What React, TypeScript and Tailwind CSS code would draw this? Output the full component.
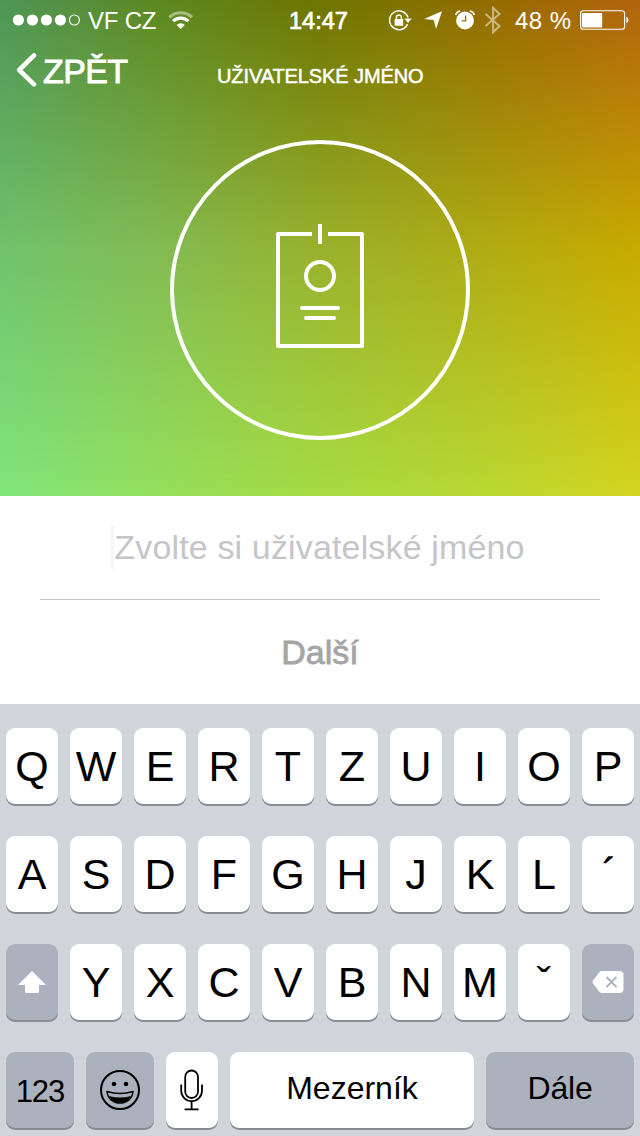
import type { ReactNode } from 'react';

function StatusBar() {
  return (
    <div className="flex h-10 items-center text-[24px] leading-[40px]">
      <svg className="ml-3 shrink-0" width="70" height="16" viewBox="0 0 70 16" fill="currentColor">
        <circle cx="6.4" cy="8" r="5.6" />
        <circle cx="20.4" cy="8" r="5.6" />
        <circle cx="34.4" cy="8" r="5.6" />
        <circle cx="48.4" cy="8" r="5.6" />
        <circle cx="62.4" cy="8" r="5" fill="none" stroke="currentColor" strokeWidth="1.1" />
      </svg>
      <span className="ml-[6px] w-[70px] shrink-0 pt-[2px] tracking-[-0.2px] whitespace-nowrap">VF CZ</span>
      <svg className="ml-[10px] shrink-0" width="26" height="20" viewBox="0 0 26 20" fill="none" stroke="currentColor" strokeWidth="3.2">
        <path d="M1.3 7.4a16.3 16.3 0 0 1 22.8 0" strokeOpacity=".45" strokeWidth="2.9" />
        <path d="M5.1 11.2a11 11 0 0 1 15.2 0" />
        <path d="M8.6 14.9a5.8 5.8 0 0 1 8.2 0l-4.1 4.1z" fill="currentColor" stroke="none" />
      </svg>
      <span className="ml-[95px] w-[60px] shrink-0 pt-[2px] text-[23.5px] tracking-[0px] [-webkit-text-stroke:0.7px_currentColor]">14:47</span>
      <svg className="ml-[39px] shrink-0" width="24" height="24" viewBox="0 0 24 24" fill="none" stroke="currentColor" strokeWidth="1.5">
        <path d="M19.6 16.1a9.4 9.4 0 1 1 .4-6.6" />
        <path d="M16.3 10.600h7.400L20 14.900z" fill="currentColor" stroke="none" />
        <rect x="6.600" y="11" width="8.600" height="6.700" rx=".5" fill="currentColor" stroke="none" />
        <path d="M8.400 11V9.400a2.500 2.500 0 0 1 5 0V11" />
      </svg>
      <svg className="ml-[12px] shrink-0" width="18" height="18" viewBox="0 0 18 18" fill="currentColor">
        <path d="M18 .2 12 18 9.800 9 0 8z" />
      </svg>
      <svg className="ml-[13px] shrink-0" width="20" height="20" viewBox="0 0 20 20" fill="none" stroke="currentColor">
        <circle cx="10" cy="10.500" r="8.900" fill="currentColor" stroke="none" />
        <path d="M.8 5.200A5 5 0 0 1 5.200 1.100M19.200 5.200a5 5 0 0 0-4.400-4.100" strokeWidth="1.600" />
        <path d="M10.600 5.500v5.300H6.500" stroke="#8d7c00" strokeWidth="1.300" />
      </svg>
      <svg className="ml-[9px] shrink-0 opacity-50" width="18" height="28" viewBox="0 0 18 28" fill="none" stroke="currentColor" strokeWidth="2">
        <path d="m1.500 8 14 12-6.400 6.300V1.800L15.500 8l-14 12" />
      </svg>
      <span className="ml-[13px] w-[58px] shrink-0 pt-[2px] tracking-[0.5px] whitespace-nowrap">48 %</span>
      <svg className="ml-[7px] shrink-0" width="50" height="20" viewBox="0 0 50 20" fill="none" stroke="currentColor">
        <rect x=".6" y=".8" width="44" height="18.400" rx="2.800" strokeWidth="1.100" />
        <rect x="2" y="3" width="20.200" height="14.500" rx="1" fill="currentColor" stroke="none" />
        <path d="M46.400 6.800c2.600 1.300 2.600 5.100 0 6.400z" fill="currentColor" stroke="none" />
      </svg>
    </div>
  );
}

function NavBar() {
  return (
    <div className="flex h-[100px] items-start">
      <svg className="mt-[12px] ml-[16px] shrink-0" width="22" height="36" viewBox="0 0 22 36" fill="none" stroke="currentColor" strokeWidth="4.600" strokeLinecap="round" strokeLinejoin="round">
        <path d="M18 3.400 3.200 18 18 32.400" />
      </svg>
      <button className="mt-[11px] ml-[5px] w-[90px] shrink-0 text-left text-[34px] leading-[40px] tracking-[-0.6px] whitespace-nowrap [-webkit-text-stroke:0.9px_currentColor]">ZPĚT</button>
      <h1 className="mt-[24px] ml-[84px] text-[20px] leading-[24px] tracking-[-0.1px] whitespace-nowrap [-webkit-text-stroke:0.5px_currentColor]">UŽIVATELSKÉ JMÉNO</h1>
    </div>
  );
}

function Badge() {
  return (
    <div className="mx-auto flex size-[300px] items-center justify-center rounded-full border-4 border-white">
      <svg className="mb-[8px]" width="88" height="124" viewBox="0 0 88 124" fill="none" stroke="currentColor" strokeWidth="4" strokeLinejoin="round">
        <path d="M36 10H2v112h84V10H52" />
        <path d="M44 0v20" />
        <circle cx="44" cy="52" r="14" />
        <path d="M26 84h36M30 94h28" strokeLinecap="round" />
      </svg>
    </div>
  );
}

function Key({ children, dark = false, className = 'w-[52px] text-[43px]' }: { children: ReactNode; dark?: boolean; className?: string }) {
  return (
    <button className={`flex h-[76px] shrink-0 items-center justify-center rounded-[9px] shadow-[0_2px_0_#898c92] ${dark ? 'bg-[#abb2bd]' : 'bg-white'} ${className}`}>
      {children}
    </button>
  );
}

function Letters({ keys }: { keys: string }) {
  return (
    <>
      {keys.split('').map((k) => (
        <Key key={k}><span className="pt-[1px] leading-none">{k}</span></Key>
      ))}
    </>
  );
}

function Keyboard() {
  return (
    <div className="flex h-[432px] flex-col gap-8 bg-[#d1d4da] px-[6px] pt-6 text-black">
      <div className="flex gap-3"><Letters keys="QWERTZUIOP" /></div>
      <div className="flex gap-3">
        <Letters keys="ASDFGHJKL" />
        <Key><span className="pb-[1px] pl-[3px] leading-none [-webkit-text-stroke:0.5px_currentColor]">´</span></Key>
      </div>
      <div className="flex gap-3">
        <Key dark>
          <svg width="28" height="24" viewBox="0 0 28 24" fill="white">
            <path d="M14 1 28 15h-7v6.500q0 1.500-1.500 1.500h-11Q7 23 7 21.500V15H0z" />
          </svg>
        </Key>
        <Letters keys="YXCVBNMˇ" />
        <Key dark>
          <svg width="32" height="24" viewBox="0 0 32 24">
            <path d="M10 1h17.500q4 0 4 4v14q0 4-4 4H10q-1.500 0-2.500-1L1 13.500Q0 12 1 10.500L7.500 2Q8.500 1 10 1z" fill="white" />
            <path d="m14.500 7 10 10m0-10-10 10" stroke="#abb2bd" strokeWidth="1.800" />
          </svg>
        </Key>
      </div>
      <div className="flex gap-3">
        <Key dark className="w-[68px] text-[31px]"><span className="pt-[5px] tracking-[-1px]">123</span></Key>
        <Key dark className="w-[68px]">
          <svg width="40" height="40" viewBox="0 0 40 40" fill="none" stroke="black" strokeWidth="2">
            <circle cx="20" cy="20" r="19" />
            <circle cx="14" cy="14" r="2.300" fill="black" stroke="none" />
            <circle cx="26" cy="14" r="2.300" fill="black" stroke="none" />
            <path d="M7 21.500q13 4 26 0c-.8 7.500-6.500 11.500-13 11.500S7.800 29 7 21.500z" strokeWidth="1.500" strokeLinejoin="round" />
            <path d="M9 26q11 3 22 0c-2 4.500-6 6.500-11 6.500S11 30.500 9 26z" fill="black" stroke="none" />
          </svg>
        </Key>
        <Key className="w-[52px]">
          <svg width="24" height="42" viewBox="0 0 24 42" fill="none" stroke="black" strokeWidth="1.800">
            <rect x="5.200" y="1.500" width="12.800" height="27.500" rx="6.400" />
            <path d="M1.200 15.500v6.200a10.400 10.400 0 0 0 20.800 0v-6.200M11.600 32.500v8M4.600 40.300h14" />
          </svg>
        </Key>
        <Key className="w-[244px] text-[32px]"><span className="pb-[4px]">Mezerník</span></Key>
        <Key dark className="w-[148px] text-[32px]"><span className="pb-[4px] tracking-[-0.2px]">Dále</span></Key>
      </div>
    </div>
  );
}

export default function App() {
  return (
    <div className="flex h-[1136px] w-[640px] flex-col overflow-hidden bg-white font-['Liberation_Sans',Arial,sans-serif]">
      <header className="relative h-[496px] shrink-0 bg-[linear-gradient(90deg,#6fc36c_0%,#83bb53_25%,#99b22d_50%,#b0ac14_75%,#c8aa00_100%)] text-white">
        <div className="absolute inset-0 bg-[linear-gradient(90deg,#4f9456_0%,#5c8720_25%,#6e7400_50%,#7e7100_62%,#966a00_78%,#b2640d_100%)] [mask-image:linear-gradient(180deg,black_0%,transparent_50%)]" />
        <div className="absolute inset-0 bg-[linear-gradient(90deg,#80e57c_0%,#94df5c_25%,#a6db42_50%,#b8d833_75%,#d4d420_100%)] [mask-image:linear-gradient(180deg,transparent_50%,black_100%)]" />
        <div className="relative">
          <StatusBar />
          <NavBar />
          <Badge />
        </div>
      </header>
      <main className="flex h-[208px] shrink-0 flex-col px-10">
        <div className="flex h-[104px] items-center justify-center border-b border-[#c8c8ca] pr-[4px] text-[34px] text-[#c5c5c9]">
          <span className="mb-[2px] h-[44px] w-[3px] bg-[#f6f6f8]" />
          <span className="tracking-[0.15px] whitespace-nowrap">Zvolte si uživatelské jméno</span>
        </div>
        <button className="h-[104px] pt-[1px] text-[34px] text-[#a5a5a7] [-webkit-text-stroke:0.8px_currentColor]">Další</button>
      </main>
      <Keyboard />
    </div>
  );
}
